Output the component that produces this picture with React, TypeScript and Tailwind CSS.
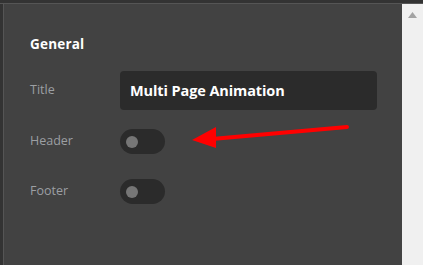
import React from "react";

function Toggle() {
  return (
    <div className="w-[45px] h-[25px] rounded-full bg-[#2b2b2b] flex items-center pl-[6px]">
      <div className="w-[12px] h-[12px] rounded-full bg-[#767676]" />
    </div>
  );
}

export default function App() {
  return (
    <div
      className="relative w-[423px] h-[265px] flex flex-col overflow-hidden bg-[#424242]"
      style={{ fontFamily: "'Open Sans', 'Noto Sans', sans-serif" }}
    >
      {/* Top frame */}
      <div className="h-[4px] bg-[#333333] border-b border-[#555555] shrink-0" />

      <div className="flex flex-1 min-h-0">
        {/* Left frame */}
        <div className="w-[4px] bg-[#333333] border-r border-[#555555] shrink-0" />

        {/* Panel */}
        <div className="flex-1 bg-[#424242] pl-[26px] pt-[31px]">
          <h2 className="text-white font-bold text-[13.5px] leading-[18px] tracking-[0.2px]">General</h2>

          <div className="mt-[18px] flex items-center h-[39px]">
            <span className="w-[90px] text-[#9c9fa3] text-[12.5px]">Title</span>
            <div className="w-[257px] h-[39px] rounded-[4px] bg-[#2b2b2b] flex items-center pl-[10px]">
              <span className="text-white font-bold text-[14.5px] tracking-[-0.1px]">Multi Page Animation</span>
            </div>
          </div>

          <div className="mt-[19px] flex items-center h-[25px]">
            <span className="w-[90px] text-[#9c9fa3] text-[12.5px]">Header</span>
            <Toggle />
          </div>

          <div className="mt-[25px] flex items-center h-[25px]">
            <span className="w-[90px] text-[#9c9fa3] text-[12.5px]">Footer</span>
            <Toggle />
          </div>
        </div>

        {/* Scrollbar */}
        <div className="w-[21px] bg-[#f0f0f0] shrink-0 flex justify-center pt-[8px]">
          <svg width="9" height="6" viewBox="0 0 9 6">
            <polygon points="4.5,0 9,6 0,6" fill="#a3a3a3" />
          </svg>
        </div>
      </div>

      {/* Annotation arrow */}
      <svg
        className="absolute left-0 top-0 pointer-events-none"
        width="423"
        height="265"
        viewBox="0 0 423 265"
      >
        <line x1="347" y1="127" x2="212" y2="139" stroke="#ff0000" strokeWidth="4" strokeLinecap="round" />
        <polygon points="192,140 216,127 216,148" fill="#ff0000" />
      </svg>
    </div>
  );
}
